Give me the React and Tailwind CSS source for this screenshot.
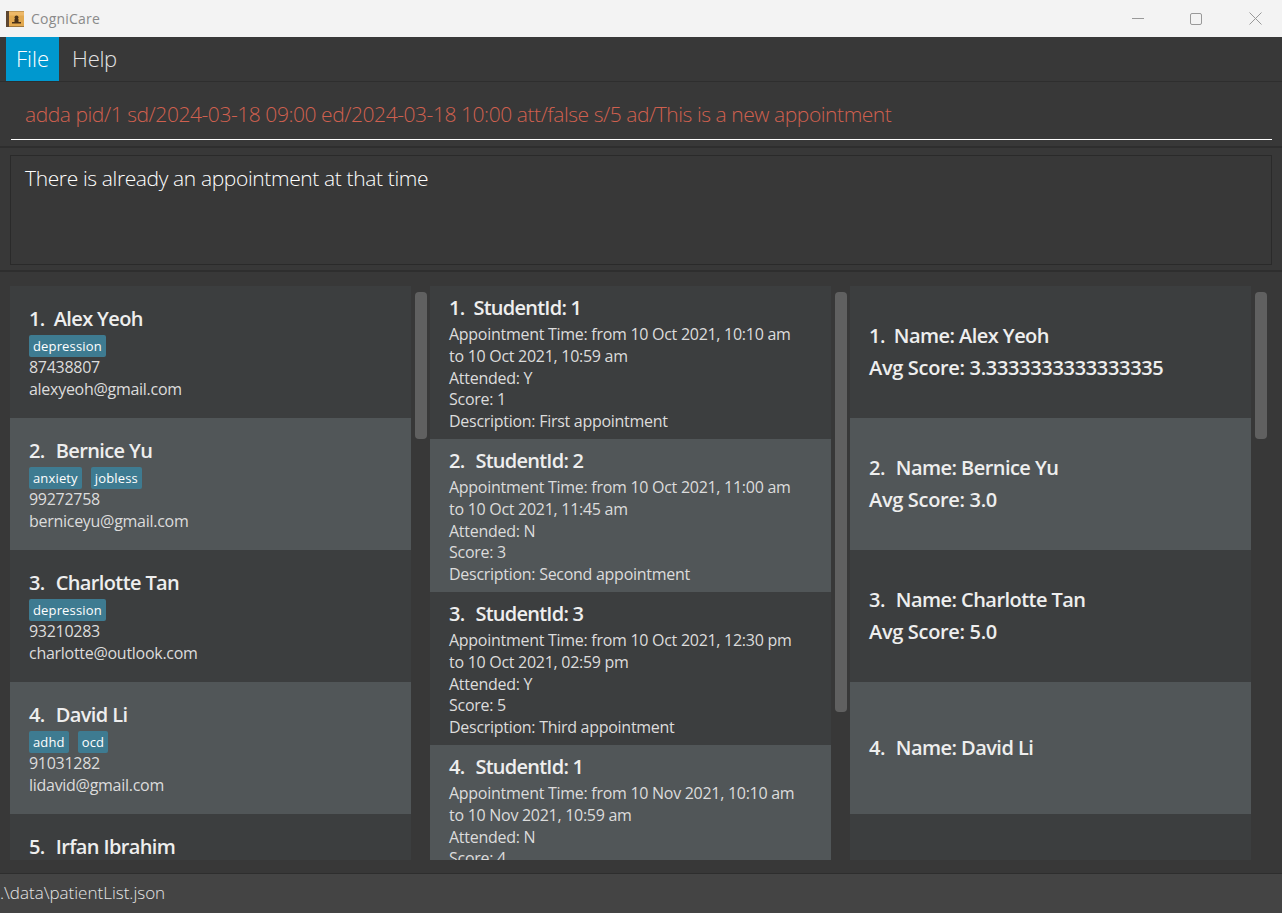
const patients = [
  { id: 1, name: 'Alex Yeoh', tags: ['depression'], phone: '87438807', email: 'alexyeoh@gmail.com' },
  { id: 2, name: 'Bernice Yu', tags: ['anxiety', 'jobless'], phone: '99272758', email: 'berniceyu@gmail.com' },
  { id: 3, name: 'Charlotte Tan', tags: ['depression'], phone: '93210283', email: 'charlotte@outlook.com' },
  { id: 4, name: 'David Li', tags: ['adhd', 'ocd'], phone: '91031282', email: 'lidavid@gmail.com' },
  { id: 5, name: 'Irfan Ibrahim', tags: ['stress'], phone: '92492021', email: 'irfan@example.com' },
];

const appointments = [
  { id: 1, student: 1, from: '10 Oct 2021, 10:10 am', to: '10 Oct 2021, 10:59 am', attended: 'Y', score: 1, desc: 'First appointment' },
  { id: 2, student: 2, from: '10 Oct 2021, 11:00 am', to: '10 Oct 2021, 11:45 am', attended: 'N', score: 3, desc: 'Second appointment' },
  { id: 3, student: 3, from: '10 Oct 2021, 12:30 pm', to: '10 Oct 2021, 02:59 pm', attended: 'Y', score: 5, desc: 'Third appointment' },
  { id: 4, student: 1, from: '10 Nov 2021, 10:10 am', to: '10 Nov 2021, 10:59 am', attended: 'N', score: 4, desc: 'Fourth appointment' },
];

const scores = [
  { id: 1, name: 'Alex Yeoh', avg: '3.3333333333333335' },
  { id: 2, name: 'Bernice Yu', avg: '3.0' },
  { id: 3, name: 'Charlotte Tan', avg: '5.0' },
  { id: 4, name: 'David Li' },
];

const cardBg = (i) => (i % 2 === 0 ? 'bg-[#3c3e3f]' : 'bg-[#515658]');
const idGap = (id) => (id === 1 ? 'mr-[9px]' : 'mr-[11px]');

const AppIcon = () => (
  <svg width="18" height="18" viewBox="0 0 18 18" className="ml-[6px]">
    <rect x="0" y="1" width="18" height="16" fill="#5d4630" />
    <rect x="3" y="1.5" width="15" height="15" fill="#e2a94f" />
    <rect x="3" y="1.5" width="15" height="4" fill="#eeb968" />
    <rect x="6" y="12" width="9" height="1.5" fill="#4a3218" />
    <circle cx="10.5" cy="7.5" r="2" fill="#4a3218" />
    <rect x="8.5" y="9" width="4" height="3" fill="#4a3218" />
  </svg>
);

const WindowButtons = () => (
  <div className="flex items-center ml-auto">
    <svg width="12" height="12" viewBox="0 0 12 12" className="mr-[46px]">
      <path d="M0 5.5H12" stroke="#999" strokeWidth="1" />
    </svg>
    <svg width="12" height="12" viewBox="0 0 12 12" className="mr-[47px]">
      <rect x="0.5" y="0.5" width="11" height="11" rx="1.5" fill="none" stroke="#999" strokeWidth="1" />
    </svg>
    <svg width="13" height="13" viewBox="0 0 13 13" className="mr-[20px]">
      <path d="M0.5 0.5L12.5 12.5M12.5 0.5L0.5 12.5" stroke="#999" strokeWidth="1" />
    </svg>
  </div>
);

const ListPanel = ({ children, thumbHeight }) => (
  <div className="flex h-full w-[420px] shrink-0">
    <div className="w-[401px] h-full overflow-hidden bg-[#3c3e3f]">{children}</div>
    <div className="w-[19px] pl-[4px] pt-[6px]">
      <div className={`w-[12px] rounded-[4px] bg-[#606060] ${thumbHeight}`} />
    </div>
  </div>
);

const Title = ({ id, tracking, children }) => (
  <div className={`flex font-semibold text-[#eeeeee] text-[20px] leading-[26px] ${tracking}`}>
    <span className={idGap(id)}>{id}.</span>
    <span>{children}</span>
  </div>
);

const Line = ({ children }) => (
  <div className="text-[16px] leading-[21.75px] text-[#dcdcdc] tracking-[-0.28px] whitespace-nowrap">{children}</div>
);

const PatientCard = ({ p, i }) => (
  <div className={`h-[132px] shrink-0 pl-[19px] pt-[20px] ${cardBg(i)}`}>
    <Title id={p.id} tracking="tracking-[-0.62px]">{p.name}</Title>
    <div className="flex gap-[9px] mt-[3px]">
      {p.tags.map((t) => (
        <span key={t} className="h-[22px] px-[4px] rounded-[2px] bg-[#3e7b91] text-[13px] leading-[22px] text-white tracking-[0.15px]">{t}</span>
      ))}
    </div>
    <Line>{p.phone}</Line>
    <Line>{p.email}</Line>
  </div>
);

const AppointmentCard = ({ a, i }) => (
  <div className={`h-[153px] shrink-0 pl-[19px] pt-[9px] ${cardBg(i)}`}>
    <Title id={a.id} tracking="tracking-[-0.75px]">StudentId: {a.student}</Title>
    <div className="mt-[3px]">
      <Line>Appointment Time: from {a.from}</Line>
      <Line>to {a.to}</Line>
      <Line>Attended: {a.attended}</Line>
      <Line>Score: {a.score}</Line>
      <Line>Description: {a.desc}</Line>
    </div>
  </div>
);

const ScoreCard = ({ s, i }) => (
  <div className={`h-[132px] shrink-0 pl-[19px] flex flex-col justify-center gap-[6px] ${cardBg(i)}`}>
    <Title id={s.id} tracking="tracking-[-0.55px]">Name: {s.name}</Title>
    {s.avg && (
      <div className="font-semibold text-[#eeeeee] text-[20px] leading-[26px] tracking-[-0.33px]">Avg Score: {s.avg}</div>
    )}
  </div>
);

export default function App() {
  return (
    <div className="h-[913px] w-[1282px] overflow-hidden flex flex-col bg-[#383838] font-['Open_Sans',sans-serif]">
      <div className="h-[37px] shrink-0 bg-[#f3f3f3] flex items-center">
        <AppIcon />
        <span className="ml-[7px] text-[14px] text-[#8a8a8a] tracking-[0.2px]">CogniCare</span>
        <WindowButtons />
      </div>

      <div className="h-[45px] shrink-0 pl-[6px] flex border-b border-[#2e2e2e] text-[22px] font-light text-white">
        <div className="w-[53px] pb-[2px] bg-[#0098cf] flex items-center justify-center">File</div>
        <div className="w-[71px] pb-[2px] flex items-center justify-center text-[#e4e4e4] tracking-[-0.3px]">Help</div>
      </div>

      <div className="h-[66px] shrink-0 pt-[1px] px-[10px] border-b-2 border-[#2e2e2e]">
        <div className="h-[57px] ml-[1px] border-b border-white pl-[14px] pt-[15px] text-[21px] leading-[32px] font-light text-[#d0604f] tracking-[-0.44px] whitespace-nowrap">
          adda pid/1 sd/2024-03-18 09:00 ed/2024-03-18 10:00 att/false s/5 ad/This is a new appointment
        </div>
      </div>

      <div className="h-[124px] shrink-0 pt-[7px] pl-[10px] pr-[10px] border-b-2 border-[#2e2e2e]">
        <div className="h-[110px] border border-[#2a2a2a] pl-[14px] pt-[6px] text-[21px] leading-[32px] font-light text-white tracking-[-0.37px]">
          There is already an appointment at that time
        </div>
      </div>

      <div className="h-[602px] shrink-0 pt-[14px] pb-[13px] pl-[10px] flex border-b border-[#2e2e2e]">
        <ListPanel thumbHeight="h-[147px]">
          {patients.map((p, i) => <PatientCard key={p.id} p={p} i={i} />)}
        </ListPanel>
        <ListPanel thumbHeight="h-[420px]">
          {appointments.map((a, i) => <AppointmentCard key={a.id} a={a} i={i} />)}
        </ListPanel>
        <ListPanel thumbHeight="h-[147px]">
          {scores.map((s, i) => <ScoreCard key={s.id} s={s} i={i} />)}
        </ListPanel>
      </div>

      <div className="flex-1 flex items-center pb-[1px] bg-[#444444] text-[17px] font-light text-[#e4e4e4]">.\data\patientList.json</div>
    </div>
  );
}
